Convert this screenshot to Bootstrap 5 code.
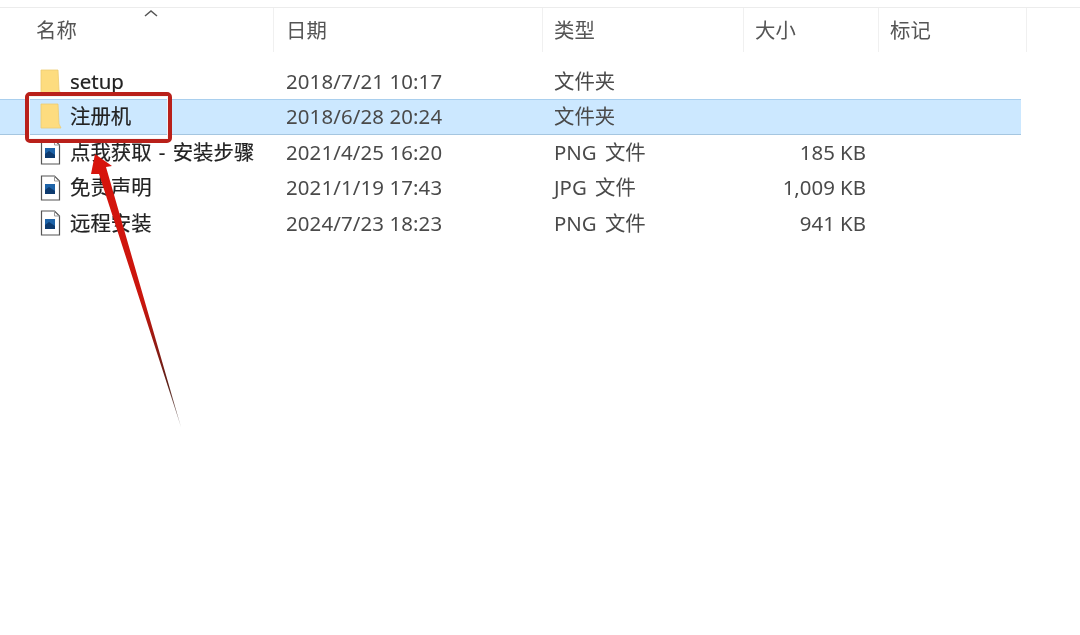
<!DOCTYPE html>
<html lang="zh-CN">
<head>
  <meta charset="UTF-8" />
  <title>文件列表</title>
  <link href="https://cdn.jsdelivr.net/npm/bootstrap@5.3.0/dist/css/bootstrap.min.css" rel="stylesheet" />
  <style>
    html, body { height: 100%; }
    body {
      background: #fff;
      font-family: "Noto Sans", "Noto Sans CJK SC", sans-serif;
      font-size: 20.4px;
      color: #4a4a4a;
      overflow: hidden;
    }
    .explorer { padding-top: 7px; filter: blur(.35px); }
    .head-row {
      height: 45px;
      border-top: 1px solid #ececec;
      color: #555;
    }
    .head-cell {
      display: flex;
      align-items: center;
      padding-top: 1px;
      border-right: 1px solid #f0f0f0;
      position: relative;
    }
    .col-name { width: 274px; padding-left: 36px; }
    .col-date { width: 269px; padding-left: 12px; }
    .col-type { width: 201px; padding-left: 11px; }
    .col-size { width: 135px; padding-left: 11px; }
    .col-tag { width: 148px; padding-left: 11px; }
    .sort-caret { position: absolute; left: 143px; top: 0; }
    .file-list { padding-top: 12px; }
    .file-row { height: 35.3px; width: 1021px; align-items: center; }
    .file-row.picked {
      background: #cce8ff;
      border-top: 1px solid #a9cfee;
      border-bottom: 1px solid #a5c6e0;
      padding-bottom: 1px;
    }
    .name-cell {
      width: 274px;
      display: flex;
      align-items: center;
      color: #222;
      white-space: pre;
      word-spacing: 2px;
      -webkit-text-stroke: .2px #222;
    }
    .file-ico { margin-left: 40px; width: 22px; flex: none; margin-right: 8px; display: block; }
    .date-cell { width: 269px; padding-left: 12px; letter-spacing: .13px; }
    .type-cell { width: 201px; padding-left: 11px; word-spacing: 3px; }
    .size-cell { width: 122px; text-align: right; }
    .red-frame {
      position: absolute;
      left: 25px; top: 92px;
      width: 147px; height: 51px;
      border: 4px solid #b9201a;
      border-radius: 5px;
    }
    .red-frame::after {
      content: "";
      position: absolute;
      inset: 0;
      border: 1px solid #f4f4f4;
    }
    .red-arrow { position: absolute; left: 0; top: 0; }
  </style>
</head>
<body>
  <div class="explorer position-relative">
    <div class="head-row d-flex">
      <div class="head-cell col-name">名称
        <svg class="sort-caret" width="16" height="9" viewBox="0 0 16 9"><path d="M2 8 8 3l6 5" fill="none" stroke="#555" stroke-width="1.5"/></svg>
      </div>
      <div class="head-cell col-date">日期</div>
      <div class="head-cell col-type">类型</div>
      <div class="head-cell col-size">大小</div>
      <div class="head-cell col-tag">标记</div>
    </div>

    <div class="file-list">
      <div class="file-row d-flex">
        <div class="name-cell">
          <svg class="file-ico" height="30" viewBox="0 0 22 30"><path d="M1 3h17l1 20 2 4H1z" fill="#fddc7f" stroke="#eccb72" stroke-width=".8"/></svg><span>setup</span>
        </div>
        <div class="date-cell">2018/7/21 10:17</div>
        <div class="type-cell">文件夹</div>
      </div>
      <div class="file-row picked d-flex">
        <div class="name-cell">
          <svg class="file-ico" height="30" viewBox="0 0 22 30"><path d="M1 3h17l1 20 2 4H1z" fill="#fddc7f" stroke="#eccb72" stroke-width=".8"/></svg><span>注册机</span>
        </div>
        <div class="date-cell">2018/6/28 20:24</div>
        <div class="type-cell">文件夹</div>
      </div>
      <div class="file-row d-flex">
        <div class="name-cell">
          <svg class="file-ico" height="26" viewBox="0 0 22 26"><path d="M1.5 1h13l5 5v19h-18z" fill="#fff" stroke="#555" stroke-width="1.2"/><path d="M14.5 1v5h5" fill="none" stroke="#999"/><path d="M5 9h10v10H5z" fill="#1d63a8"/><path d="M5 15l4-3 6 4v3H5z" fill="#0d3a6e"/></svg><span>点我获取 - 安装步骤</span>
        </div>
        <div class="date-cell">2021/4/25 16:20</div>
        <div class="type-cell">PNG 文件</div>
        <div class="size-cell">185 KB</div>
      </div>
      <div class="file-row d-flex">
        <div class="name-cell">
          <svg class="file-ico" height="26" viewBox="0 0 22 26"><path d="M1.5 1h13l5 5v19h-18z" fill="#fff" stroke="#555" stroke-width="1.2"/><path d="M14.5 1v5h5" fill="none" stroke="#999"/><path d="M5 9h10v10H5z" fill="#1d63a8"/><path d="M5 15l4-3 6 4v3H5z" fill="#0d3a6e"/></svg><span>免责声明</span>
        </div>
        <div class="date-cell">2021/1/19 17:43</div>
        <div class="type-cell">JPG 文件</div>
        <div class="size-cell">1,009 KB</div>
      </div>
      <div class="file-row d-flex">
        <div class="name-cell">
          <svg class="file-ico" height="26" viewBox="0 0 22 26"><path d="M1.5 1h13l5 5v19h-18z" fill="#fff" stroke="#555" stroke-width="1.2"/><path d="M14.5 1v5h5" fill="none" stroke="#999"/><path d="M5 9h10v10H5z" fill="#1d63a8"/><path d="M5 15l4-3 6 4v3H5z" fill="#0d3a6e"/></svg><span>远程安装</span>
        </div>
        <div class="date-cell">2024/7/23 18:23</div>
        <div class="type-cell">PNG 文件</div>
        <div class="size-cell">941 KB</div>
      </div>
    </div>
  </div>

  <!-- annotation drawn over the list -->
  <div class="red-frame"></div>
  <svg class="red-arrow" width="1080" height="635" viewBox="0 0 1080 635">
    <defs>
      <linearGradient id="arrowFade" x1="0" y1="0" x2="0" y2="1">
        <stop offset="0" stop-color="#d8140c"/>
        <stop offset=".55" stop-color="#c9160e"/>
        <stop offset=".85" stop-color="#5a2018"/>
        <stop offset="1" stop-color="#999"/>
      </linearGradient>
    </defs>
    <path d="M95 154 112 166 106 167 181 427 99 174 91 174z" fill="url(#arrowFade)"/>
  </svg>
</body>
</html>
